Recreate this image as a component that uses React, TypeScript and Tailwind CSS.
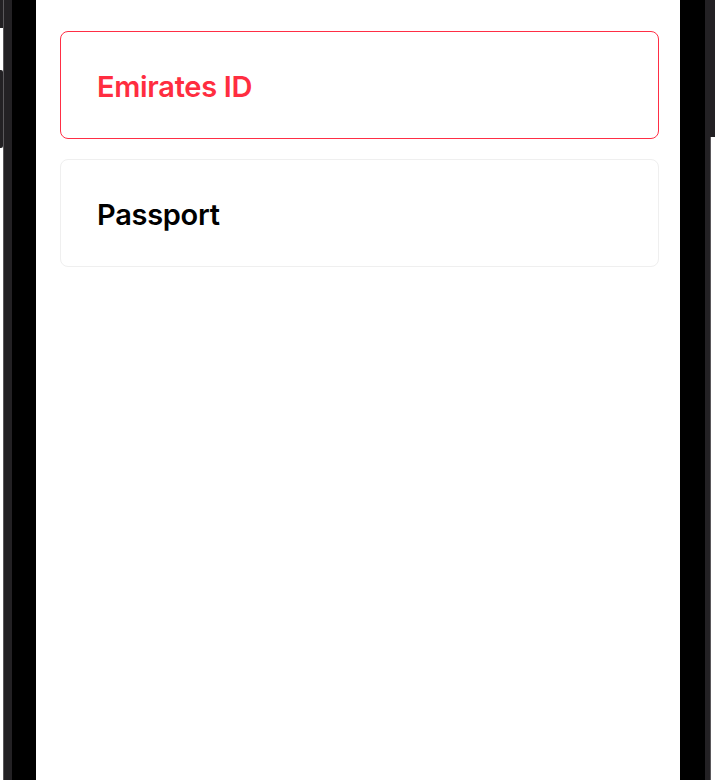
import React from 'react';

const options = [
  { id: 'eid', label: 'Emirates ID', selected: true },
  { id: 'passport', label: 'Passport', selected: false },
];

export default function App() {
  return (
    <div className="flex h-[780px] w-[715px] overflow-hidden bg-white" style={{ fontFamily: 'Inter, "Noto Sans", sans-serif' }}>
      {/* left side buttons */}
      <div className="flex w-[3px] flex-col">
        <div className="h-[28px] bg-[#232124]" />
        <div className="h-[42px] bg-white" />
        <div className="h-[78px] rounded-r-[2px] bg-[#232124]" />
        <div className="flex-1 bg-white" />
      </div>
      {/* frame */}
      <div className="w-[9px] border-l border-[#5a585b] bg-[#232124]" />
      <div className="w-[24px] bg-black" />

      {/* screen */}
      <div className="flex flex-1 flex-col gap-[20px] bg-white pl-[24px] pr-[21px] pt-[31px]">
        {options.map((o) => (
          <div
            key={o.id}
            className={
              o.selected
                ? 'flex h-[108px] items-center rounded-[8px] border-[1.5px] border-[#ff2e45] pl-[36px] pt-[3px]'
                : 'flex h-[108px] items-center rounded-[8px] border-[1.5px] border-[#efefef] pl-[36px] pt-[3px]'
            }
          >
            <span
              className={
                o.selected
                  ? 'text-[29px] font-semibold tracking-[-0.3px] text-[#ff2d40]'
                  : 'text-[29px] font-semibold tracking-[-0.3px] text-black'
              }
            >
              {o.label}
            </span>
          </div>
        ))}
      </div>

      <div className="w-[25px] bg-black" />
      <div className="w-[5px] bg-[#232124]" />
      {/* right side button */}
      <div className="flex w-[5px] flex-col">
        <div className="h-[137px] bg-[#232124]" />
        <div className="flex-1 border-l border-[#5a585b] bg-white" />
      </div>
    </div>
  );
}
